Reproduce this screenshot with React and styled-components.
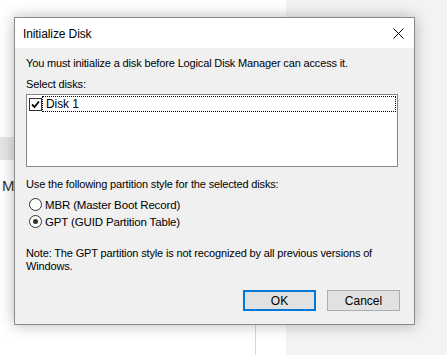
import React, { useState } from "react";
import styled, { createGlobalStyle } from "styled-components";

const GlobalStyle = createGlobalStyle`
  html, body {
    margin: 0;
    padding: 0;
    background: #ffffff;
  }
  body {
    font-family: "Segoe UI", "Liberation Sans", Arial, sans-serif;
    font-size: 11px;
    letter-spacing: -0.15px;
    color: #000;
  }
`;

const App = () => {
  const [style, setStyle] = useState("gpt");
  const [checked, setChecked] = useState(true);

  return (
    <Desktop>
      <GlobalStyle />
      <BackLeft>
        <SideTab />
        <SideLetter>M</SideLetter>
        <Divider />
      </BackLeft>
      <BackRight />

      <Dialog>
        <TitleBar>
          <Title>Initialize Disk</Title>
          <CloseButton aria-label="Close">
            <svg width="11" height="11" viewBox="0 0 11 11">
              <path d="M0.5 0.5 L10.5 10.5 M10.5 0.5 L0.5 10.5" stroke="#000" strokeWidth="1" />
            </svg>
          </CloseButton>
        </TitleBar>

        <Body>
          <Text>You must initialize a disk before Logical Disk Manager can access it.</Text>
          <Label>Select disks:</Label>
          <ListBox>
            <ListRow onClick={() => setChecked((v) => !v)}>
              <CheckBox>
                {checked && (
                  <svg width="9" height="9" viewBox="0 0 9 9">
                    <path d="M1 4.5 L3.5 7 L8 1.5" fill="none" stroke="#000" strokeWidth="1.8" />
                  </svg>
                )}
              </CheckBox>
              <FocusLabel>Disk 1</FocusLabel>
            </ListRow>
          </ListBox>

          <Label $top={10}>Use the following partition style for the selected disks:</Label>
          <RadioGroup>
            <RadioRow onClick={() => setStyle("mbr")}>
              <Radio $on={style === "mbr"} />
              MBR (Master Boot Record)
            </RadioRow>
            <RadioRow onClick={() => setStyle("gpt")}>
              <Radio $on={style === "gpt"} />
              GPT (GUID Partition Table)
            </RadioRow>
          </RadioGroup>

          <Note>
            Note: The GPT partition style is not recognized by all previous versions of
            <br />
            Windows.
          </Note>

          <Buttons>
            <Button $focused>OK</Button>
            <Button>Cancel</Button>
          </Buttons>
        </Body>
      </Dialog>
    </Desktop>
  );
};

const Desktop = styled.div`
  position: relative;
  width: 447px;
  height: 355px;
  display: flex;
  overflow: hidden;
`;

const BackLeft = styled.div`
  position: relative;
  width: 286px;
  background: #ffffff;
`;

const BackRight = styled.div`
  flex: 1;
  background: #f3f3f3;
`;

const SideTab = styled.div`
  margin-top: 137px;
  width: 16px;
  height: 23px;
  background: #e6e6e6;
`;

const SideLetter = styled.div`
  margin-top: 16px;
  padding-left: 2px;
  font-size: 15px;
  line-height: 20px;
  letter-spacing: 0;
  color: #333;
`;

const Divider = styled.div`
  position: absolute;
  left: 255px;
  top: 320px;
  bottom: 0;
  width: 1px;
  background: #d9d9d9;
`;

const Dialog = styled.div`
  position: absolute;
  left: 14px;
  top: 17px;
  width: 399px;
  height: 306px;
  border: 1px solid #8a8a8a;
  background: #f0f0f0;
  box-shadow: 0 0 14px rgba(0, 0, 0, 0.28);
  display: flex;
  flex-direction: column;
`;

const TitleBar = styled.div`
  height: 30px;
  background: #ffffff;
  display: flex;
  align-items: center;
  justify-content: space-between;
  padding: 0 10px 0 8px;
`;

const Title = styled.span`
  font-size: 12px;
  letter-spacing: -0.1px;
  color: #000;
  padding-top: 1px;
`;

const CloseButton = styled.span`
  display: flex;
  align-items: center;
  padding-top: 1px;
`;

const Body = styled.div`
  flex: 1;
  padding: 8px 14px 0 11px;
  display: flex;
  flex-direction: column;
`;

const Text = styled.div`
  line-height: 15px;
  white-space: nowrap;
`;

const Label = styled.div`
  margin-top: ${(p) => p.$top ?? 6}px;
  line-height: 15px;
  white-space: nowrap;
`;

const ListBox = styled.div`
  margin-top: 2px;
  margin-right: 2px;
  height: 70px;
  background: #ffffff;
  border: 1px solid #828790;
  padding: 1px 1px 0 2px;
`;

const ListRow = styled.div`
  display: flex;
  align-items: center;
  height: 16px;
  cursor: default;
`;

const CheckBox = styled.span`
  width: 11px;
  height: 11px;
  border: 1px solid #333;
  background: #fff;
  display: flex;
  align-items: center;
  justify-content: center;
  flex: none;
`;

const FocusLabel = styled.span`
  flex: 1;
  height: 14px;
  line-height: 14px;
  border: 1px dotted #000;
  padding-left: 3px;
  font-size: 12px;
  letter-spacing: -0.1px;
`;

const RadioGroup = styled.div`
  margin-top: 4px;
  display: flex;
  flex-direction: column;
  padding-left: 3px;
`;

const RadioRow = styled.label`
  display: flex;
  align-items: center;
  gap: 3px;
  height: 17px;
  font-size: 11.5px;
  white-space: nowrap;
`;

const Radio = styled.span`
  width: 11px;
  height: 11px;
  border: 1px solid #333;
  border-radius: 50%;
  background: #fff;
  position: relative;
  flex: none;

  &::after {
    content: "";
    display: ${(p) => (p.$on ? "block" : "none")};
    position: absolute;
    left: 3px;
    top: 3px;
    width: 5px;
    height: 5px;
    border-radius: 50%;
    background: #333;
  }
`;

const Note = styled.div`
  margin-top: 17px;
  line-height: 13px;
  white-space: nowrap;
`;

const Buttons = styled.div`
  margin-top: 17px;
  display: flex;
  justify-content: flex-end;
  gap: 11px;
`;

const Button = styled.button`
  box-sizing: border-box;
  width: 73px;
  height: 21px;
  font-family: inherit;
  font-size: 12px;
  color: #000;
  background: #e1e1e1;
  border: ${(p) => (p.$focused ? "2px solid #0078d7" : "1px solid #adadad")};
  padding: 0;
  cursor: default;
`;

export default App;
